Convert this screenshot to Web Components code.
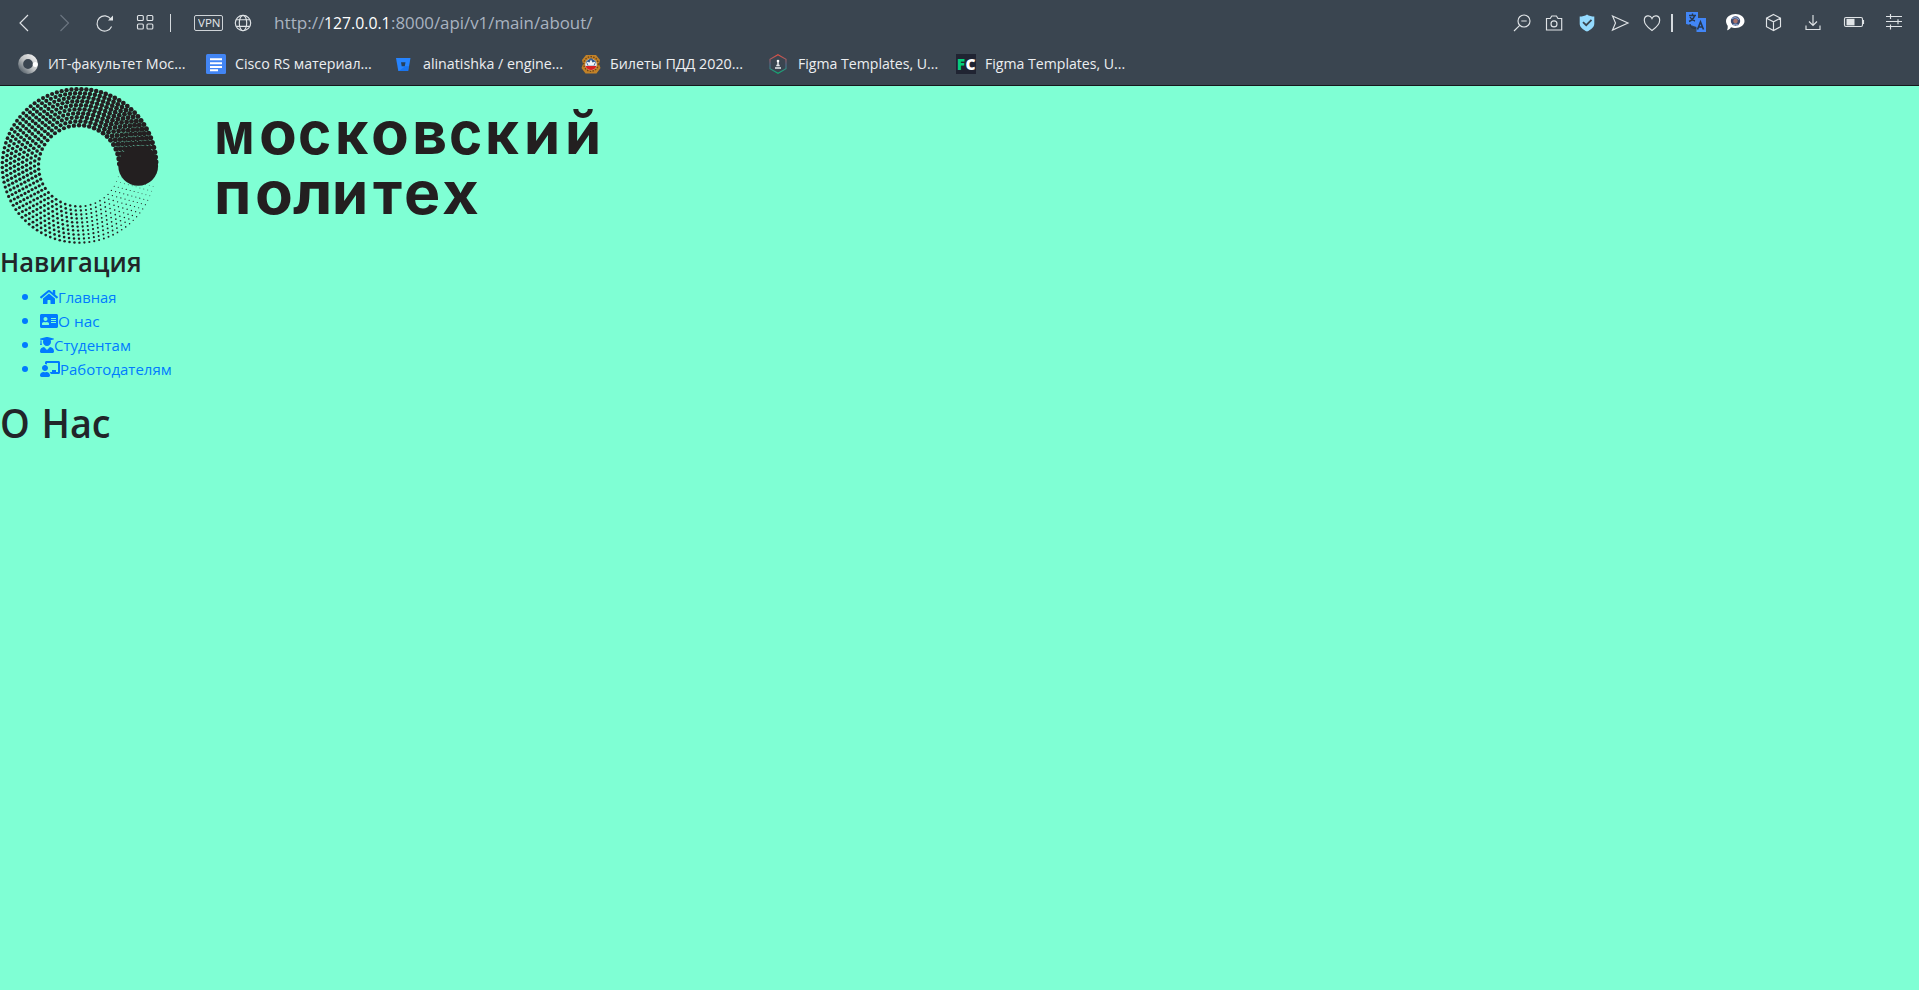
<!DOCTYPE html>
<html lang="ru">
<head>
<meta charset="utf-8">
<title>О Нас</title>
<style>
html,body{margin:0;height:100%;overflow:hidden;background:#7fffd4;font-family:"Open Sans","Noto Sans",sans-serif}
</style>
</head>
<body>
<browser-frame></browser-frame>
<about-page></about-page>
<script>
const define=(name,html,setup)=>customElements.define(name,class extends HTMLElement{
  connectedCallback(){
    if(this.shadowRoot)return;
    const root=this.attachShadow({mode:'open'});
    root.innerHTML=typeof html==='function'?html(this):html;
    if(setup)setup(this,root);
  }
});

// Text run whose glyphs are condensed or widened to a fixed advance width.
define('fit-text',el=>`<style>:host{display:inline-block;white-space:nowrap;width:${el.getAttribute('w')}px}span{display:inline-block;transform-origin:0 50%;white-space:pre}</style><span><slot></slot></span>`,(el,root)=>{
  const s=root.querySelector('span');
  s.style.transform=`scaleX(${+el.getAttribute('w')/s.offsetWidth})`;
});

const icons={
 back:'<path d="M16 4 8 12l8 8"/>',
 forward:'<path d="M8.500 4l8 8-8 8"/>',
 reload:'<path d="M18.600 15.500A7.600 7.600 0 1 1 18 8.300"/><path d="M20 4.500v5h-5z" fill="currentColor" stroke="none"/>',
 tabs:'<rect x="4.500" y="4.500" width="5.800" height="5" rx="1"/><rect x="14" y="4.500" width="5.800" height="5" rx="1"/><rect x="4.500" y="13" width="5.800" height="5" rx="1"/><rect x="14" y="13" width="5.800" height="5" rx="1"/>',
 globe:'<circle cx="12" cy="12" r="7.700"/><ellipse cx="12" cy="12" rx="3.700" ry="7.700"/><path d="M5.200 8.700h13.600M5.200 15.300h13.600"/>',
 zoom:'<circle cx="14" cy="10" r="6"/><path d="M9.700 14.300 4 20M11.300 10h5.400"/>',
 camera:'<path d="M4.500 7.500h3.700l1.600-2.500h4.600l1.600 2.500h3.700v11.500H4.500z"/><circle cx="12" cy="12.900" r="3"/>',
 shield:'<path d="M12 3.500c2 1.400 4.700 2 7.300 2v7.200c0 3.300-3.500 6.200-7.300 7.800-3.800-1.600-7.300-4.500-7.300-7.800V5.500c2.600 0 5.300-.6 7.300-2z" fill="#94dbff" stroke="none"/><path d="m8 11.200 3.200 3 5.300-5.300" stroke="#3a4550" stroke-width="1.800"/>',
 send:'<path d="M4.500 5 20 12 4.500 19l3-7z"/>',
 heart:'<path d="M12 19.500C8.500 17 4.300 13 4.300 9.200c0-5 5.900-5.800 7.700-1.700 1.800-4.100 7.700-3.300 7.700 1.700 0 3.800-4.200 7.800-7.700 10.300z"/>',
 translate:'<path d="M2 1h12v6h8v14h-9.500v-5L8 14.500 2 13z" fill="#4286f6" stroke="none"/><path d="M5 4.500h7M8.500 2.500v2M10.500 5c-1 3-3 4.500-5.500 5.500M6 6c1 2 3 3.500 5 4M6 13c0 3 3 5 6 4" stroke="#27384d" stroke-width="1.400"/><path d="m13.500 18.500 3-7.500 3 7.500M14.500 16h4" stroke="#27384d" stroke-width="1.600"/>',
 bubble:'<path d="M12.500 3c5 0 9 3 9 7s-4 7-9 7c-2 0-3.200-.3-4.500-.8C7 18 5.500 19 4 19.300c.7-1.300.8-3 .7-4.600-1-1.300-1.700-2.900-1.700-4.700 0-4 4.500-7 9.500-7z" fill="#fff" stroke="none"/><circle cx="12.500" cy="10" r="4.700" fill="#3c4a70" stroke="none"/><circle cx="12.500" cy="10" r="2.300" fill="#a97068" stroke="none"/><path d="M9 8c1.500-2 5-2 7 1M10 14c2-1.500 4-1 5 .5" stroke="#889fc8"/>',
 cube:'<path d="m12.500 3.500 7 3.700v8.500l-7 3.800-7-3.800V7.200zM5.500 7.200l7 3.600 7-3.600M12.500 10.800V19.500"/>',
 download:'<path d="M12 4v10.500M8 10.500l4 4 4-4M5 14.500v4h14v-4"/>',
 battery:'<rect x="2.500" y="6.500" width="18" height="9" rx="1.500"/><path d="M21.500 9v4"/><rect x="4.500" y="7.800" width="8" height="6.600" fill="currentColor" stroke="none"/>',
 tune:'<path d="M4 5.500h16M4 10.500h16M4 15.500h16M8.500 3v5M16 8.200v5M8.500 13.500v5"/>'
};
define('tool-icon',el=>`<style>:host{display:block;width:24px;height:24px;margin-left:${el.getAttribute('gap')||0}px;color:#dfe3e6;flex:none}:host([dim]){color:#6b7580}svg{display:block}</style><svg width="24" height="24" viewBox="0 0 24 24" fill="none" stroke="currentColor" stroke-width="1.150">${icons[el.getAttribute('name')]}</svg>`);

const marks={
 ring:'<defs><linearGradient id="g" x1="0" y1="1" x2="1" y2="0"><stop stop-color="#59646d"/><stop offset=".5" stop-color="#bfc2c3"/><stop offset="1" stop-color="#eee"/></linearGradient></defs><circle cx="10" cy="10" r="7.400" fill="none" stroke="url(#g)" stroke-width="5"/><circle cx="17.300" cy="10.500" r="2.500" fill="#fff"/>',
 docs:'<rect width="20" height="20" rx="1.500" fill="#4285f4"/><path d="M4 5.200h12M4 9.200h12M4 13h12M4 16.200h8" stroke="#fff" stroke-width="1.900"/>',
 bitbucket:'<path d="M3 4h14.500l-2.300 13H5.300z" fill="#2684ff"/><path d="m8 8.200h4.500l-.7 4H8.700z" fill="#26405c"/><path d="M12 12.200h4l-.8 4.800H6z" fill="#0c64dd" opacity=".45"/>',
 crest:'<path d="M5 1h10l4 5-1 4 1.500 4-4 5.500h-11L.5 14 2 10 1 6z" fill="#c28228"/><circle cx="10" cy="10" r="7.300" fill="none" stroke="#6d4317" stroke-width="1.300" stroke-dasharray="1.500 1.300"/><circle cx="10" cy="10.500" r="5.800" fill="#dfe6ed"/><path d="M4.500 12h11A5.800 5.800 0 0 1 4.500 12" fill="#d72222"/><path d="M5 7.500 10 4l5 3.500-1.500 4h-7z" fill="#32598d"/><path d="m10 5.500 1.500 3 3-1-2 4h-5l-2-4 3 1z" fill="#f3f5f8"/>',
 hex:'<defs><linearGradient id="h" x2="0" y2="1"><stop stop-color="#e44f40"/><stop offset=".55" stop-color="#536e91"/><stop offset="1" stop-color="#10ac70"/></linearGradient></defs><path d="m10 .7 8 4.600v9.400l-8 4.600-8-4.600V5.300z" fill="none" stroke="url(#h)" stroke-width="1.100"/><path d="M10 6v5M7 14h6M8.300 11.500h3.400" stroke="#e9ecee" stroke-width="1.500"/><circle cx="10" cy="7" r="1.300" fill="#fff"/>',
 fc:'<rect width="20" height="20" fill="#202432"/><text x=".8" y="15.600" font-family="Open Sans" font-weight="800" font-size="15.500" fill="#05ce7c">F</text><text x="9.600" y="15.600" font-family="Open Sans" font-weight="800" font-size="15.500" fill="#fff">C</text>'
};
define('book-mark',el=>`<style>:host{display:flex;align-items:center;gap:9.500px;width:187.500px;height:24px;font-size:14.500px;line-height:24px;color:#eceef0}svg{flex:none}</style><svg width="20" height="20" viewBox="0 0 20 20">${marks[el.getAttribute('icon')]}</svg><fit-text w="${el.getAttribute('w')}">${el.textContent}</fit-text>`);

define('browser-frame',`<style>
:host{display:flex;flex-direction:column;box-sizing:border-box;height:86px;background:#3a4550;border-bottom:1px solid #15191c}
.bar{display:flex;align-items:center;height:46px;padding:0 13px 0 12px}
i{display:block;background:#d5dade;height:18px;flex:none}
.vpn{box-sizing:border-box;border:1px solid #ced3d7;border-radius:2px;width:29px;height:16px;margin-left:23px;font-size:10.500px;line-height:14px;color:#e4e7ea;text-align:center}
.url{display:flex;align-items:center;margin-left:19px;font-size:16.500px;line-height:24px;color:#a9b3c0}
.url fit-text:nth-child(2){color:#fff}
.space{flex:1}
.marks{display:flex;padding:6px 0 0 18px}
</style>
<div class="bar">
<tool-icon name="back"></tool-icon><tool-icon name="forward" dim gap="16"></tool-icon><tool-icon name="reload" gap="17"></tool-icon><tool-icon name="tabs" gap="16"></tool-icon>
<i style="width:1px;margin-left:13px"></i><div class="vpn"><fit-text w="22">VPN</fit-text></div><tool-icon name="globe" gap="8"></tool-icon>
<div class="url"><fit-text w="50">http://</fit-text><fit-text w="67">127.0.0.1</fit-text><fit-text w="201">:8000/api/v1/main/about/</fit-text></div>
<div class="space"></div>
<tool-icon name="zoom"></tool-icon><tool-icon name="camera" gap="8"></tool-icon><tool-icon name="shield" gap="9"></tool-icon><tool-icon name="send" gap="9"></tool-icon><tool-icon name="heart" gap="8"></tool-icon><i style="width:2px;margin-left:7px"></i><tool-icon name="translate" gap="11"></tool-icon><tool-icon name="bubble" gap="15"></tool-icon><tool-icon name="cube" gap="14"></tool-icon><tool-icon name="download" gap="16"></tool-icon><tool-icon name="battery" gap="17"></tool-icon><tool-icon name="tune" gap="16"></tool-icon>
</div>
<div class="marks">
<book-mark icon="ring" w="137">ИТ-факультет Мос...</book-mark><book-mark icon="docs" w="136.500">Cisco RS материал...</book-mark><book-mark icon="bitbucket" w="140.500">alinatishka / engine...</book-mark><book-mark icon="crest" w="133">Билеты ПДД 2020...</book-mark><book-mark icon="hex" w="140">Figma Templates, U...</book-mark><book-mark icon="fc" w="140">Figma Templates, U...</book-mark>
</div>`);

// Ten concentric rings of dots that grow clockwise until they merge in a disc.
function dots(){
  let d='';
  for(let i=0;i<10;i++){
    const r=40.600+i*4.020,n=48+i*5;
    for(let k=0;k<n;k++){
      const t=k/(n-1), a=.27+t*(2*Math.PI-.32), x=79.100+r*Math.cos(a), y=79.900+r*Math.sin(a);
      const s=t<.25?.4+t*3.600:1.300+(t-.25)*1.850;
      d+=`<circle cx="${x.toFixed(2)}" cy="${y.toFixed(2)}" r="${s.toFixed(2)}"/>`;
    }
  }
  return d+'<circle cx="138.200" cy="79.900" r="19.900"/>';
}
// One line of the wordmark: every letter is scaled so that its ink fills its own slot.
const FONT='700 59px Inter, "Open Sans", sans-serif';
function wordLine(word,slots){
  const c=document.createElement('canvas').getContext('2d');
  c.font=FONT;
  return [...word].map((ch,i)=>{
    const m=c.measureText(ch), [x0,x1]=slots[i], next=slots[i+1]?slots[i+1][0]:x1;
    const k=(x1-x0)/(m.actualBoundingBoxRight+m.actualBoundingBoxLeft);
    return `<span style="width:${next-x0}px"><b style="letter-spacing:${m.actualBoundingBoxRight-m.width}px;transform:translateX(${m.actualBoundingBoxLeft*k}px) scaleX(${k})">${ch}</b></span>`;
  }).join('');
}
define('poly-logo',()=>`<style>
:host{display:flex;height:158px;color:#231f20}
svg{display:block;flex:none}
.word{padding:17px 0 0 57px}
.line{display:flex;font:${FONT};line-height:60px;height:60px}
.line span{flex:none}
b{display:inline-block;font-weight:inherit;transform-origin:0 50%}
</style>
<svg width="160" height="160" fill="#231f20">${dots()}</svg>
<div class="word"><div class="line">${wordLine('московский',[[217,252],[260.500,294],[300.300,330],[338,369],[373,406.500],[415,445],[451.300,481],[488.500,520],[527,557.500],[568,598.500]])}</div><div class="line">${wordLine('политех',[[217,248],[256.500,290],[293,328.500],[335,365.500],[373,402],[406,438],[442.500,477]])}</div></div>`);

const fa={
 home:[576,'M280.37 148.26L96 300.11V464a16 16 0 0 0 16 16l112.06-.29a16 16 0 0 0 15.92-16V368a16 16 0 0 1 16-16h64a16 16 0 0 1 16 16v95.64a16 16 0 0 0 16 16.05L464 480a16 16 0 0 0 16-16V300L295.67 148.26a12.19 12.19 0 0 0-15.3 0zM571.6 251.47L488 182.56V44.05a12 12 0 0 0-12-12h-56a12 12 0 0 0-12 12v72.61L318.47 43a48 48 0 0 0-61 0L4.34 251.47a12 12 0 0 0-1.6 16.9l25.5 31A12 12 0 0 0 45.15 301l235.22-193.74a12.19 12.19 0 0 1 15.3 0L530.9 301a12 12 0 0 0 16.9-1.6l25.5-31a12 12 0 0 0-1.7-16.93z'],
 card:[576,'M528 32H48C21.5 32 0 53.500 0 80v352c0 26.500 21.500 48 48 48h480c26.500 0 48-21.500 48-48V80c0-26.500-21.500-48-48-48zm-352 96c35.300 0 64 28.700 64 64s-28.700 64-64 64-64-28.700-64-64 28.700-64 64-64zm112 236.800c0 10.600-10 19.200-22.400 19.200H86.400C74 384 64 375.400 64 364.800v-19.200c0-31.800 30.100-57.600 67.200-57.600h5c12.300 5.100 25.700 8 39.800 8s27.600-2.900 39.800-8h5c37.100 0 67.200 25.800 67.200 57.600v19.200zM512 312c0 4.400-3.600 8-8 8H360c-4.400 0-8-3.600-8-8v-16c0-4.400 3.600-8 8-8h144c4.400 0 8 3.600 8 8v16zm0-64c0 4.400-3.600 8-8 8H360c-4.400 0-8-3.600-8-8v-16c0-4.400 3.600-8 8-8h144c4.400 0 8 3.600 8 8v16zm0-64c0 4.400-3.600 8-8 8H360c-4.400 0-8-3.600-8-8v-16c0-4.400 3.600-8 8-8h144c4.400 0 8 3.600 8 8v16z'],
 graduate:[448,'M319.4 320.6L224 416l-95.4-95.4C57.1 323.7 0 382.2 0 454.4v9.6c0 26.5 21.5 48 48 48h352c26.5 0 48-21.5 48-48v-9.6c0-72.2-57.1-130.7-128.6-133.8zM13.6 79.8l6.4 1.5v58.4c-7 4.2-12 11.5-12 20.3 0 8.4 4.6 15.4 11.1 19.7L3.5 242c-1.7 6.9 2.1 14 7.6 14h41.8c5.5 0 9.3-7.1 7.6-14l-15.6-62.3C51.4 175.4 56 168.4 56 160c0-8.8-5-16.1-12-20.3V87.1l66 15.9c-8.6 17.2-14 36.4-14 57 0 70.7 57.3 128 128 128s128-57.3 128-128c0-20.6-5.3-39.8-14-57l96.3-23.2c18.2-4.4 18.2-27.1 0-31.5l-190.4-46c-13-3.1-26.7-3.1-39.7 0L13.6 48.2c-18.1 4.4-18.1 27.2 0 31.6z'],
 teacher:[640,'M208 352c-2.39 0-4.78.35-7.06 1.09C187.98 357.3 174.35 360 160 360c-14.35 0-27.98-2.7-40.95-6.91-2.28-.74-4.66-1.09-7.05-1.09C49.94 352-.33 402.48 0 464.62.14 490.88 21.73 512 48 512h224c26.27 0 47.86-21.12 48-47.38.33-62.14-49.94-112.62-112-112.62zm-48-32c53.02 0 96-42.98 96-96s-42.98-96-96-96-96 42.98-96 96 42.98 96 96 96zM592 0H208c-26.47 0-48 22.25-48 49.59V96c23.42 0 45.1 6.78 64 17.8V64h352v288h-64v-64H384v64h-76.24c19.1 16.69 33.12 38.73 39.69 64H592c26.47 0 48-22.25 48-49.59V49.59C640 22.25 618.47 0 592 0z']
};
define('nav-item',el=>{const [w,p]=fa[el.getAttribute('icon')];return `<style>:host{display:flex;align-items:center;height:24px;color:#007bff;font-size:15px;font-weight:400;line-height:24px}b{width:6px;height:6px;border-radius:50%;background:currentColor;margin:0 12px 0 22px}svg{display:block;margin-top:-1px}</style><b></b><svg width="${w/32}" height="16" viewBox="0 0 ${w} 512" fill="currentColor"><path d="${p}"/></svg><fit-text w="${el.getAttribute('w')}">${el.textContent}</fit-text>`});

define('about-page',`<style>
:host{display:block;color:#212529}
h1,h2{margin:0;font-weight:550}
h2{font-size:27px;height:34px;line-height:36px;margin-bottom:7px}
h1{font-size:39px;height:48px;line-height:48px;margin-top:18px}
</style>
<poly-logo></poly-logo>
<h2><fit-text w="141.500">Навигация</fit-text></h2>
<nav><nav-item icon="home" w="58">Главная</nav-item><nav-item icon="card" w="42">О нас</nav-item><nav-item icon="graduate" w="77">Студентам</nav-item><nav-item icon="teacher" w="112">Работодателям</nav-item></nav>
<h1><fit-text w="110.500" style="word-spacing:2px">О Нас</fit-text></h1>`);
</script>
</body>
</html>
